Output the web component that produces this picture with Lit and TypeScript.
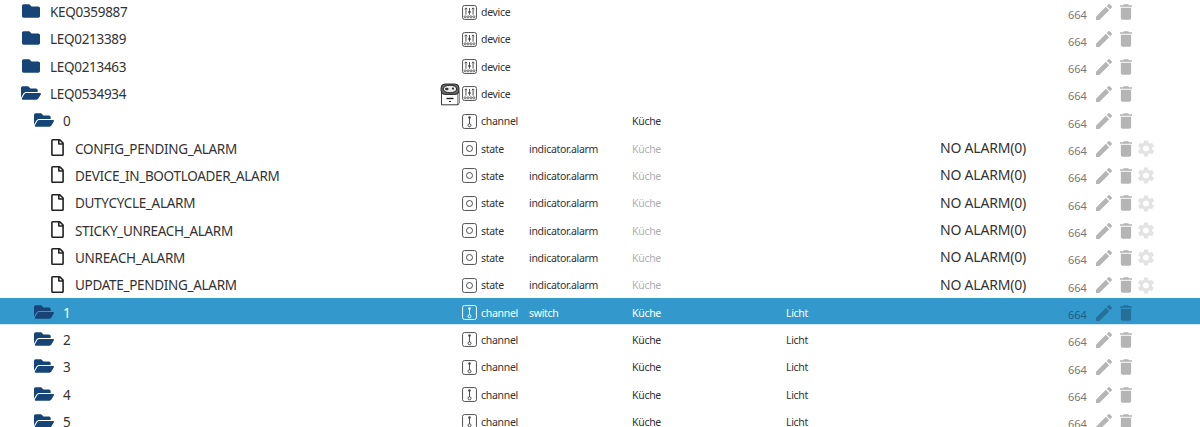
import { LitElement, html, css, svg } from "lit";
import { customElement } from "lit/decorators.js";

type Row = { name: string; indent: number; icon: "closed" | "open" | "file"; type: "device" | "channel" | "state"; role?: string; room?: string; fn?: string; value?: string; gear?: boolean; sel?: boolean; adapter?: boolean; };

const alarm = (name: string): Row => ({ name, indent: 2, icon: "file", type: "state", role: "indicator.alarm", room: "Küche", value: "NO ALARM", gear: true });
const channel = (name: string, sel = false): Row => ({ name, indent: 1, icon: "open", type: "channel", role: sel ? "switch" : "", room: "Küche", fn: "Licht", sel });

const ROWS: Row[] = [
  { name: "KEQ0359887", indent: 0, icon: "closed", type: "device" },
  { name: "LEQ0213389", indent: 0, icon: "closed", type: "device" },
  { name: "LEQ0213463", indent: 0, icon: "closed", type: "device" },
  { name: "LEQ0534934", indent: 0, icon: "open", type: "device", adapter: true },
  { name: "0", indent: 1, icon: "open", type: "channel", room: "Küche" },
  alarm("CONFIG_PENDING_ALARM"),
  alarm("DEVICE_IN_BOOTLOADER_ALARM"),
  alarm("DUTYCYCLE_ALARM"),
  alarm("STICKY_UNREACH_ALARM"),
  alarm("UNREACH_ALARM"),
  alarm("UPDATE_PENDING_ALARM"),
  channel("1", true),
  channel("2"),
  channel("3"),
  channel("4"),
  channel("5"),
];

const nameIcon = (k: Row["icon"]) => {
  if (k === "closed") return html`<svg class="ic folder" viewBox="0 0 512 512"><path d="M464 128H272l-64-64H48C21.5 64 0 85.5 0 112v288c0 26.5 21.5 48 48 48h416c26.5 0 48-21.5 48-48V176c0-26.5-21.5-48-48-48z"/></svg>`;
  if (k === "open") return html`<svg class="ic folder" viewBox="0 0 576 512"><path d="M572.694 292.093L500.27 416.248A63.997 63.997 0 0 1 444.989 448H45.025c-18.523 0-30.064-20.093-20.731-36.093l72.424-124.155A64 64 0 0 1 152 256h399.964c18.523 0 30.064 20.093 20.73 36.093zM152 224h328v-48c0-26.51-21.49-48-48-48H272l-64-64H48C21.49 64 0 85.49 0 112v278.046l69.077-118.418C86.214 242.25 118.009 224 152 224z"/></svg>`;
  return html`<svg class="ic file" viewBox="0 0 384 512"><path d="M369.9 97.9L286 14C277 5 264.8-.1 252.1-.1H48C21.5 0 0 21.5 0 48v416c0 26.5 21.5 48 48 48h288c26.5 0 48-21.5 48-48V131.9c0-12.7-5.1-25-14.1-34zM332.1 128H256V51.9l76.1 76.1zM48 464V48h160v104c0 13.3 10.7 24 24 24h104v288H48z"/></svg>`;
};

const typeBody = (t: Row["type"]) => {
  if (t === "device") return svg`
    <path d="M4.2 10.3V3.2M8 10.3V3.2M11.8 10.3V3.2" stroke-width="1"/>
    <path d="M2.9 4.5 4.2 3l1.3 1.5M10.5 4.5 11.8 3l1.3 1.5" stroke-width=".9"/>
    <circle cx="8" cy="7.4" r="1.3" fill="currentColor" stroke="none"/>
    <circle cx="3.3" cy="12.6" r="1.1" stroke-width=".8"/><circle cx="6.4" cy="12.6" r="1.1" stroke-width=".8"/><circle cx="9.6" cy="12.6" r="1.1" stroke-width=".8"/><circle cx="12.7" cy="12.6" r="1.1" stroke-width=".8"/>`;
  if (t === "channel") return svg`
    <circle cx="8" cy="3.8" r="1.3" fill="currentColor" stroke="none"/><path d="M8 4v6.6" stroke-width="1"/><circle cx="8" cy="12" r="1.6" stroke-width="1"/>`;
  return svg`<circle cx="8" cy="8" r="3.2" stroke-width="1"/>`;
};

const typeIcon = (t: Row["type"]) => html`<svg class="type" viewBox="0 0 16 16" fill="none" stroke="currentColor"><rect x=".6" y=".6" width="14.8" height="14.8" rx="2" stroke-width="1"/>${typeBody(t)}</svg>`;

const adapterImg = html`<svg class="adapter" viewBox="0 0 20 23" fill="none" stroke="#222"><path d="M1.5 7.5 L1.5 21.8 L18 21.8 L18 7.5" fill="#fff" stroke-width=".9"/><path d="M18 9.5 19.3 8.5V20L18 21.8" fill="#ccc" stroke-width=".6"/><rect x="1" y="1" width="18" height="10.5" rx="4" fill="#666" stroke-width=".9"/><ellipse cx="10" cy="6" rx="6.8" ry="3.8" fill="#e8e8e8" stroke="#222"/><ellipse cx="6.8" cy="6" rx="1.8" ry="1.3" fill="#333" stroke="none"/><circle cx="13" cy="5.6" r="1.1" fill="#333" stroke="none"/><path d="M6.5 15.5h7" stroke-width="1.4"/><path d="M9 18.5h2" stroke-width="1"/></svg>`;

const pencil = html`<svg class="act pencil" viewBox="3 3 18 18"><path d="M3 17.25V21h3.75L17.81 9.94l-3.75-3.75L3 17.25zM20.71 7.04c.39-.39.39-1.02 0-1.41l-2.34-2.34c-.39-.39-1.02-.39-1.41 0l-1.83 1.83 3.75 3.75 1.83-1.83z"/></svg>`;
const trash = html`<svg class="act trash" viewBox="5 3 14 18"><path d="M6 19c0 1.1.9 2 2 2h8c1.1 0 2-.9 2-2V7H6v12zM19 4h-3.5l-1-1h-5l-1 1H5v2h14V4z"/></svg>`;
const gear = html`<svg class="act gear" viewBox="2.5 2 19 20"><path d="M19.14 12.94c.04-.3.06-.61.06-.94 0-.32-.02-.64-.07-.94l2.03-1.58c.18-.14.23-.41.12-.61l-1.92-3.32c-.12-.22-.37-.29-.59-.22l-2.39.96c-.5-.38-1.03-.7-1.62-.94l-.36-2.54c-.04-.24-.24-.41-.48-.41h-3.84c-.24 0-.43.17-.47.41l-.36 2.54c-.59.24-1.13.57-1.62.94l-2.39-.96c-.22-.08-.47 0-.59.22L2.74 8.87c-.12.21-.08.47.12.61l2.03 1.58c-.05.3-.09.63-.09.94s.02.64.07.94l-2.03 1.58c-.18.14-.23.41-.12.61l1.92 3.32c.12.22.37.29.59.22l2.39-.96c.5.38 1.03.7 1.62.94l.36 2.54c.05.24.24.41.48.41h3.84c.24 0 .44-.17.47-.41l.36-2.54c.59-.24 1.13-.56 1.62-.94l2.39.96c.22.08.47 0 .59-.22l1.92-3.32c.12-.22.07-.47-.12-.61l-2.01-1.58zM12 15.6c-1.98 0-3.6-1.62-3.6-3.6s1.62-3.6 3.6-3.6 3.6 1.62 3.6 3.6-1.62 3.6-3.6 3.6z"/></svg>`;

@customElement("app-root")
export class AppRoot extends LitElement {
  static styles = css`
    :host { display: block; height: 427px; overflow: hidden; background: #fff; font-family: "Noto Sans", "Open Sans", sans-serif; color: #333; }
    .list { margin-top: -2.67px; }
    .row { display: grid; grid-template-columns: 440px 19px 3px 67px 103px 154px 154px 128px 1fr; height: 27.33px; padding-top: 2px; align-items: center; font-size: 10.5px; letter-spacing: -0.3px; box-sizing: border-box; }
    .row.sel { background: #3399cc; color: #fff; border-bottom: 1px solid #d5e9f4; padding-top: 3px; }
    .name { display: flex; align-items: center; font-size: 13.5px; letter-spacing: -0.3px; white-space: nowrap; color: #333; }
    .sel .name { color: #fff; }
    .i0 { padding-left: 21px; } .i1 { padding-left: 34px; } .i2 { padding-left: 51px; }
    .ic { fill: #164477; flex: none; }
    .folder { width: 20px; height: 18px; margin-right: 9px; margin-bottom: 2px; }
    .file { width: 13px; height: 17px; fill: #222; margin-right: 11px; margin-bottom: 2px; }
    .adapter { width: 20px; height: 23px; display: block; margin-top: 1px; }
    .type { width: 15px; height: 15px; color: #444; display: block; flex: none; }
    .sel .type { color: #fff; }
    .tcell { display: flex; align-items: center; gap: 4px; grid-column: 3 / span 2; padding-left: 3px; }
    .room-dim { color: #b0b0b0; }
    .value { font-size: 14px; letter-spacing: -0.2px; color: #333; margin-bottom: 2px; }
    .value small { font-size: 14px; }
    .ops { display: flex; align-items: center; color: #777; }
    .perm { font-size: 11px; letter-spacing: 0; color: #777; width: 28px; position: relative; top: 2px; }
    .sel .perm { color: #1d5f85; }
    .act { fill: #b5b5b5; display: block; flex: none; }
    .sel .act { fill: #256f99; }
    .pencil { width: 16px; height: 16px; margin-right: 8px; }
    .trash { width: 12px; height: 16px; margin-right: 6px; }
    .gear { width: 16px; height: 17px; fill: #e3e3e3; }
  `;

  render() {
    return html`<div class="list">
      ${ROWS.map((r) => html`<div class="row ${r.sel ? "sel" : ""}">
        <div class="name i${r.indent}">${nameIcon(r.icon)}<span>${r.name}</span></div>
        <div>${r.adapter ? adapterImg : ""}</div>
        <div class="tcell">${typeIcon(r.type)}<span>${r.type}</span></div>
        <div>${r.role ?? ""}</div>
        <div class=${r.type === "state" ? "room-dim" : ""}>${r.room ?? ""}</div>
        <div>${r.fn ?? ""}</div>
        <div class="value">${r.value ? html`${r.value}<small>(0)</small>` : ""}</div>
        <div class="ops"><span class="perm">664</span>${pencil}${trash}${r.gear ? gear : ""}</div>
      </div>`)}
    </div>`;
  }
}
